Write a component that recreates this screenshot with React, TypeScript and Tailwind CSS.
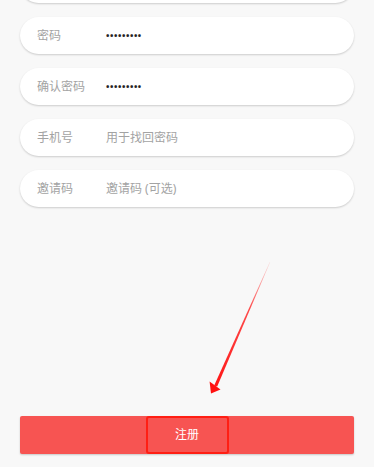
import React from "react";

const fields = [
  { label: "", value: "", placeholder: "" },
  { label: "密码", value: "•••••••••", placeholder: "" },
  { label: "确认密码", value: "•••••••••", placeholder: "" },
  { label: "手机号", value: "", placeholder: "用于找回密码" },
  { label: "邀请码", value: "", placeholder: "邀请码 (可选)" },
];

export default function App() {
  return (
    <div
      className="relative w-[374px] h-[467px] overflow-hidden bg-[#f8f8f8] flex flex-col"
      style={{ fontFamily: '"Noto Sans", "Noto Sans CJK SC", sans-serif' }}
    >
      {/* Form rows */}
      <div className="flex flex-col gap-[14px] px-[20px] -mt-[34px]">
        {fields.map((f, i) => (
          <div
            key={i}
            className="h-[37px] rounded-full bg-white flex items-center pl-[17px] shadow-[0_1px_2px_rgba(0,0,0,0.18)]"
          >
            <span className="w-[69px] text-[12px] text-[#a3a3a3]">{f.label}</span>
            {f.value ? (
              <span className="text-[9px] tracking-[0.6px] text-[#222] font-bold">{f.value}</span>
            ) : (
              <span className="text-[12px] text-[#a3a3a3]">{f.placeholder}</span>
            )}
          </div>
        ))}
      </div>

      <div className="flex-1" />

      {/* Submit */}
      <div className="px-[20px] pb-[13px]">
        <button className="w-full h-[38px] bg-[#f75452] rounded-[2px] flex justify-center shadow-[0_1px_2px_rgba(0,0,0,0.2)]">
          <span className="w-[83px] h-full border-2 border-[#ff1f14] rounded-[3px] flex items-center justify-center text-white text-[12px]">
            注册
          </span>
        </button>
      </div>

      {/* Annotation arrow */}
      <svg className="absolute inset-0 pointer-events-none" width="374" height="467" viewBox="0 0 374 467">
        <defs>
          <linearGradient id="fade" x1="270" y1="262" x2="211" y2="393" gradientUnits="userSpaceOnUse">
            <stop offset="0" stopColor="#ff2a2a" stopOpacity="0.15" />
            <stop offset="0.35" stopColor="#ff2020" stopOpacity="0.8" />
            <stop offset="1" stopColor="#ff1010" stopOpacity="1" />
          </linearGradient>
        </defs>
        <polygon
          points="270.2,262 269.8,262 214.2,385.6 217.2,386.6"
          fill="url(#fade)"
        />
        <polygon points="211,393.5 209.6,381.5 220.5,389.5" fill="#ff1010" />
      </svg>
    </div>
  );
}
